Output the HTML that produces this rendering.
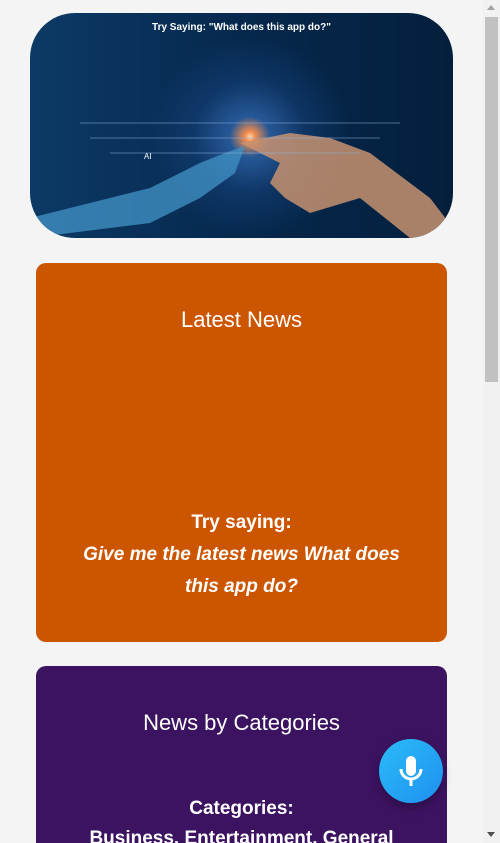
<!DOCTYPE html>
<html><head><style>
html,body{margin:0;padding:0;}
body{width:500px;height:843px;overflow:hidden;background:#f4f4f4;font-family:"Liberation Sans",Roboto,sans-serif;position:relative;}
.sb{position:absolute;right:0;top:0;width:17px;height:843px;background:#f1f1f1;}
.thumb{position:absolute;right:2px;top:17px;width:13px;height:365px;background:#c1c1c1;}
.hero{position:absolute;left:30px;top:13px;width:423px;height:225px;border-radius:45px;overflow:hidden;
background:radial-gradient(circle at 52% 55%,#ffd9b0 0,#f28c4c 2%,rgba(60,120,200,.6) 8%,rgba(30,80,150,.35) 22%,rgba(10,40,80,0) 40%),linear-gradient(90deg,#0c3a66,#06284d 50%,#041f3c);}
.hero .t{position:absolute;top:9px;width:100%;text-align:center;color:#fff;font-size:10px;font-weight:bold;}
.card{position:absolute;left:36px;width:411px;border-radius:10px;color:#fff;text-align:center;overflow:hidden;}
.o{top:263px;height:379px;background:#cc5500;}
.p{top:666px;height:177px;border-radius:10px 10px 0 0;background:#3c1361;}
h2{font-weight:normal;font-size:22px;margin:0;position:absolute;width:100%;}
.mic{position:absolute;left:379px;top:739px;width:64px;height:64px;border-radius:50%;background:linear-gradient(135deg,#2bbcf7,#1e90f0);box-shadow:0 4px 10px rgba(0,0,0,.3);}
</style></head><body>
<div class="hero"><div class="t">Try Saying: "What does this app do?"</div>
<svg width="423" height="225" style="position:absolute;left:0;top:0">
<path d="M0 205 L120 175 L170 150 L195 140 L215 133 L205 160 L170 185 L120 210 L0 225Z" fill="#3f8fc0" opacity=".8"/>
<path d="M210 130 L260 120 L300 125 L340 140 L400 185 L423 215 L423 225 L380 225 L330 185 L280 200 L255 185 L240 170 L250 150Z" fill="#c79270" opacity=".85"/>
<g stroke="#8fb6dd" stroke-width="1" opacity=".5"><line x1="50" y1="110" x2="370" y2="110"/><line x1="60" y1="125" x2="350" y2="125"/><line x1="80" y1="140" x2="330" y2="140"/></g>
<text x="114" y="146" fill="#fff" font-size="8" font-family="Liberation Sans">AI</text>
</svg></div>
<div class="card o"><h2 style="top:44px">Latest News</h2>
<div style="position:absolute;top:244px;width:100%;font-size:19px;line-height:32px;"><b>Try saying:</b><br><b><i>Give me the latest news What does<br>this app do?</i></b></div></div>
<div class="card p"><h2 style="top:44px">News by Categories</h2>
<div style="position:absolute;top:128px;width:100%;font-size:19px;line-height:30px;"><b>Categories:</b><br><b>Business, Entertainment, General</b></div></div>
<div class="mic"><svg width="64" height="64" viewBox="0 0 64 64"><rect x="27" y="17" width="10" height="20" rx="5" fill="#fff"/><path d="M22 30 a10 10 0 0 0 20 0" stroke="#fff" stroke-width="3" fill="none"/><line x1="32" y1="40" x2="32" y2="47" stroke="#fff" stroke-width="3"/></svg></div>
<div class="sb"><div class="thumb"></div>
<div style="position:absolute;left:4px;top:5px;border:4px solid transparent;border-bottom:5px solid #a3a3a3;border-top:0"></div>
<div style="position:absolute;left:4px;bottom:6px;border:4px solid transparent;border-top:5px solid #505050;border-bottom:0"></div></div>
</body></html>
